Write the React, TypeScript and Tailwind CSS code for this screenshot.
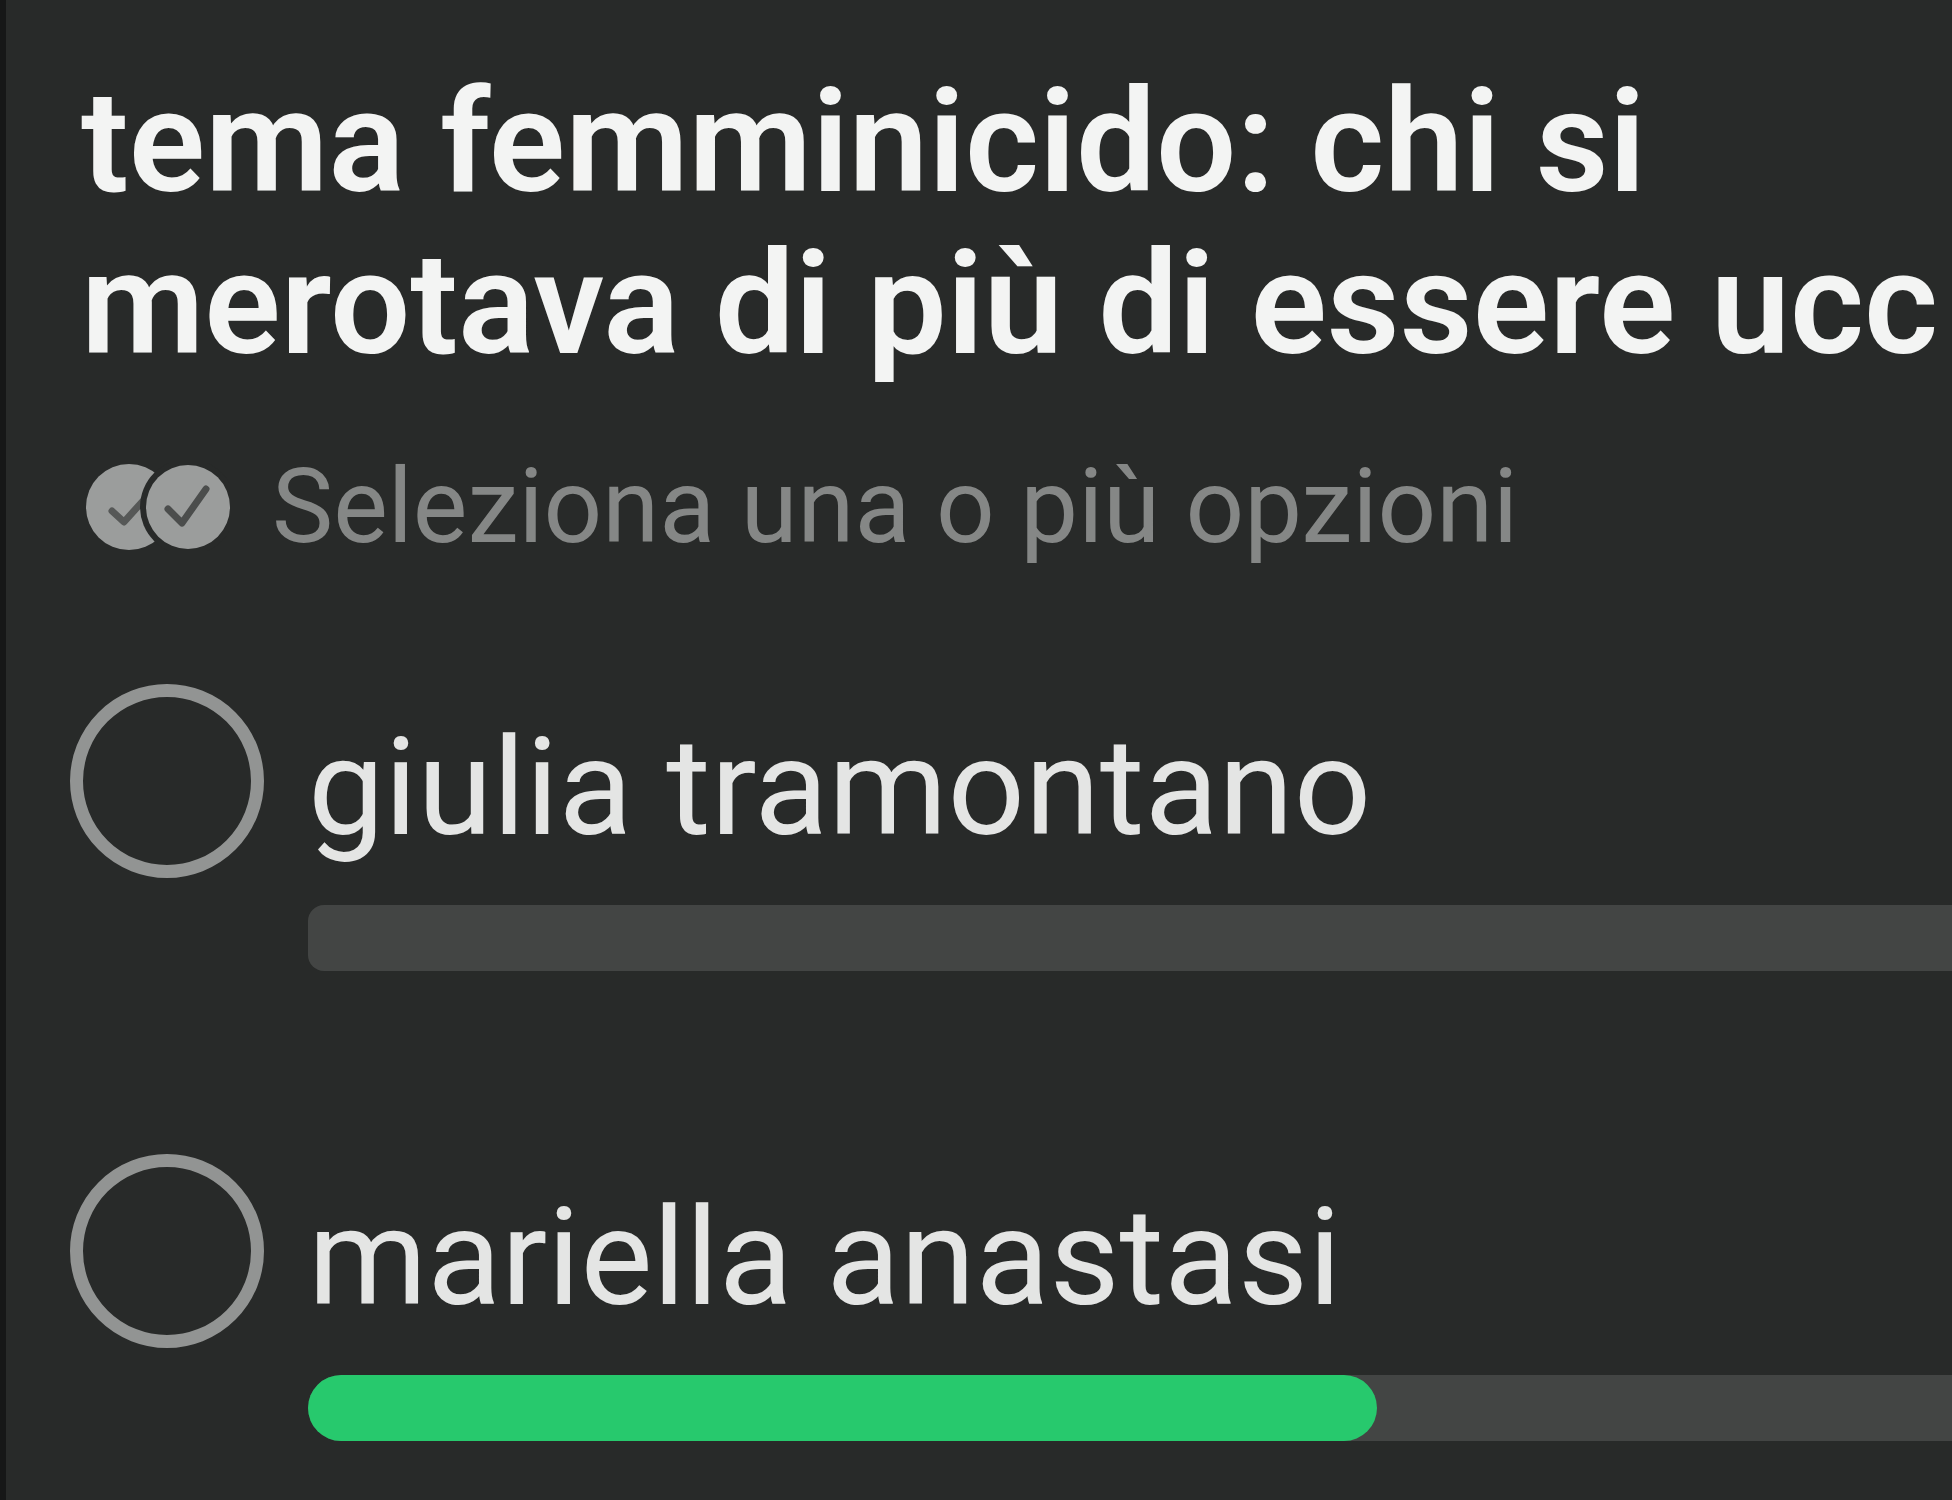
import clsx from "clsx";

interface PollOptionProps {
  id: string;
  label: string;
  percentage: number;
}

const options: PollOptionProps[] = [
  { id: "option-1", label: "giulia tramontano", percentage: 0 },
  { id: "option-2", label: "mariella anastasi", percentage: 65 },
];

const MultipleChoiceIcon = () => (
  <svg
    viewBox="0 0 146 88"
    className="h-[88px] w-[146px] shrink-0"
    fill="none"
    aria-hidden="true"
  >
    <circle cx="45" cy="44" r="43" fill="#9b9d9c" />
    <path
      d="M28 48l12 11 18-20"
      stroke="#565857"
      strokeWidth="7"
      strokeLinecap="round"
      strokeLinejoin="round"
    />
    <circle cx="104" cy="44" r="48" fill="#282a29" />
    <circle cx="104" cy="44" r="42" fill="#9b9d9c" />
    <path
      d="M84 46l14 14 24-34"
      stroke="#4b4d4c"
      strokeWidth="7"
      strokeLinecap="round"
      strokeLinejoin="round"
    />
  </svg>
);

const PollOption = ({ id, label, percentage }: PollOptionProps) => {
  return (
    <li className="flex items-start gap-11">
      <input
        id={id}
        type="checkbox"
        className="size-[194px] shrink-0 appearance-none rounded-full border-[13px] border-[#929493]"
      />
      <div className="min-w-0 flex-1 pt-6">
        <label
          htmlFor={id}
          className="block text-[136px] leading-[160px] whitespace-nowrap text-[#e4e5e4]"
        >
          {label}
        </label>
        <div
          className={clsx(
            "mt-[37px] h-[66px] bg-[#434544]",
            percentage > 0 ? "rounded-l-full" : "rounded-l-2xl",
          )}
        >
          {percentage > 0 && (
            <div
              className="h-full rounded-full bg-[#27c96d]"
              style={{ width: `${percentage}%` }}
            />
          )}
        </div>
      </div>
    </li>
  );
};

const App = () => {
  return (
    <main className="min-h-screen overflow-hidden border-l-[6px] border-[#161717] bg-[#282a29] pt-[62px] pb-14 font-[Roboto,sans-serif]">
      <h1 className="pl-[75px] text-[142px] leading-[162px] font-semibold whitespace-nowrap text-[#f3f4f3]">
        tema femminicido: chi si
        <br />
        merotava di più di essere ucc
      </h1>
      <div className="mt-[61px] flex items-center gap-[42px] pl-[78px]">
        <MultipleChoiceIcon />
        <p className="text-[103px] leading-[120px] whitespace-nowrap text-[#858786]">
          Seleziona una o più opzioni
        </p>
      </div>
      <ul className="mt-[117px] flex flex-col gap-[183px] pl-16">
        {options.map((option) => (
          <PollOption key={option.id} {...option} />
        ))}
      </ul>
    </main>
  );
};

export default App;
